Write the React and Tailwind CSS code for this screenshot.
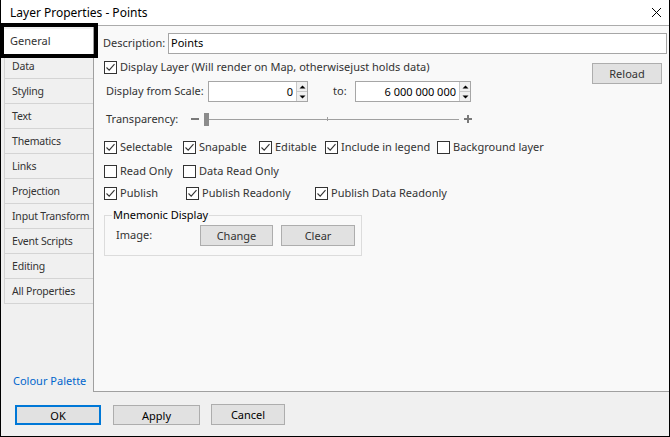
import React from 'react';

const font = { fontFamily: '"Noto Sans", "Open Sans", sans-serif' };

const Check = ({ checked }) => (
    <span className="w-[13px] h-[13px] border border-[#333333] bg-white flex items-center justify-center shrink-0">
        {checked && (
            <svg width="11" height="11" viewBox="0 0 11 11">
                <path d="M1.5 5.5 L4.2 8.2 L9.5 2.2" stroke="#333333" fill="none" strokeWidth="1.1" />
            </svg>
        )}
    </span>
);

const CheckItem = ({ checked, label, w }) => (
    <div className={`flex items-center gap-[3px] shrink-0 ${w}`}>
        <Check checked={checked} />
        <span className="text-[11px] text-[#333333] leading-[16px] whitespace-nowrap">{label}</span>
    </div>
);

const Spinner = () => (
    <div className="w-[11px] h-[19px] flex flex-col border-l border-[#c8c8c8] bg-[#f0f0f0]">
        <div className="flex-1 flex items-center justify-center border-b border-[#c8c8c8]">
            <svg width="7" height="4" viewBox="0 0 7 4"><path d="M0.5 3.5 L3.5 0.5 L6.5 3.5 Z" fill="#000" /></svg>
        </div>
        <div className="flex-1 flex items-center justify-center">
            <svg width="7" height="4" viewBox="0 0 7 4"><path d="M0.5 0.5 L3.5 3.5 L6.5 0.5 Z" fill="#000" /></svg>
        </div>
    </div>
);

const NumBox = ({ value, w }) => (
    <div className={`h-[21px] ${w} border border-[#a6a6a6] bg-white flex items-center`}>
        <span className="flex-1 text-right pr-[3px] text-[11px] text-black leading-[16px]">{value}</span>
        <Spinner />
    </div>
);

const Btn = ({ children, w, h = 'h-[21px]', extra = '' }) => (
    <button className={`${w} ${h} border border-[#adadad] bg-[#e1e1e1] text-[11px] text-[#333333] flex items-center justify-center leading-none ${extra}`}>
        {children}
    </button>
);

const tabs = ['Data', 'Styling', 'Text', 'Thematics', 'Links', 'Projection', 'Input Transform', 'Event Scripts', 'Editing', 'All Properties'];

export default function App() {
    return (
        <div className="w-[670px] h-[437px] flex flex-col bg-[#f0f0f0] border-x border-b border-black overflow-hidden" style={font}>
            {/* title bar */}
            <div className="h-[26px] shrink-0 bg-white border-b border-[#ababab] flex items-center pl-[9px] pr-[7px]">
                <span className="text-[12px] text-black leading-none">Layer Properties - Points</span>
                <svg className="ml-auto" width="11" height="11" viewBox="0 0 11 11">
                    <path d="M1 1 L10 10 M10 1 L1 10" stroke="#000" strokeWidth="1" />
                </svg>
            </div>

            <div className="flex-1 flex min-h-0">
                {/* sidebar */}
                <div className="w-[92px] shrink-0 flex flex-col pt-[3px] pl-[3px]">
                    <div className="relative h-[25px] bg-white flex items-center pl-[6px] z-10">
                        <span className="text-[11px] text-[#333333]">General</span>
                        <div className="absolute -left-[4px] -top-[6px] -right-[5px] -bottom-[4px] border-[4px] border-black pointer-events-none" />
                    </div>
                    {tabs.map((t) => (
                        <div key={t} className="h-[25px] border-l border-b border-[#d4d4d4] flex items-center pl-[7px] pt-[1px]">
                            <span className="text-[10.5px] tracking-[-0.2px] text-[#333333] whitespace-nowrap">{t}</span>
                        </div>
                    ))}
                    <div className="mt-auto mb-[3px] pl-[9px] text-[11px] text-[#0066cc] leading-[16px]">Colour Palette</div>
                </div>

                {/* content panel */}
                <div className="flex-1 bg-[#f9f9f9] border-l border-b border-[#a0a0a0] flex flex-col pt-[7px] pr-[2px]">
                    <div className="h-[21px] flex items-center pl-[9px]">
                        <span className="w-[65px] text-[11px] text-[#333333]">Description:</span>
                        <div className="flex-1 h-[21px] border border-[#a6a6a6] bg-white flex items-center pl-[2px] text-[11px] text-black">Points</div>
                    </div>

                    <div className="flex mt-[5px]">
                        <div className="flex flex-col">
                            <div className="pl-[10px]">
                                <CheckItem checked label="Display Layer (Will render on Map, otherwisejust holds data)" />
                            </div>
                            <div className="h-[21px] mt-[6px] flex items-center pl-[12px]">
                                <span className="w-[102px] text-[11px] text-[#333333]">Display from Scale:</span>
                                <NumBox value="0" w="w-[100px]" />
                                <span className="ml-[25px] w-[22px] text-[11px] text-[#333333]">to:</span>
                                <NumBox value="6 000 000 000" w="w-[116px]" />
                            </div>
                        </div>
                        <Btn w="w-[70px]" extra="ml-auto mr-[5px] mt-[4px]">Reload</Btn>
                    </div>

                    <div className="h-[16px] mt-[9px] flex items-center pl-[12px]">
                        <span className="w-[85px] text-[11px] text-[#333333]">Transparency:</span>
                        <span className="w-[8px] h-[2px] bg-[#7a7a7a]" />
                        <div className="relative w-[255px] ml-[5px] h-[14px] flex items-center">
                            <span className="w-[5px] h-[13px] bg-[#8c8c8c] shrink-0" />
                            <span className="flex-1 h-[1px] bg-[#a0a0a0]" />
                            <span className="absolute left-[123px] top-[5px] w-[1px] h-[4px] bg-[#a0a0a0]" />
                        </div>
                        <span className="ml-[5px] relative w-[8px] h-[8px] flex items-center justify-center">
                            <span className="absolute w-[8px] h-[2px] bg-[#7a7a7a]" />
                            <span className="absolute w-[2px] h-[8px] bg-[#7a7a7a]" />
                        </span>
                    </div>

                    <div className="flex mt-[12px] pl-[10px]">
                        <CheckItem checked label="Selectable" w="w-[79px]" />
                        <CheckItem checked label="Snapable" w="w-[76px]" />
                        <CheckItem checked label="Editable" w="w-[66px]" />
                        <CheckItem checked label="Include in legend" w="w-[112px]" />
                        <CheckItem label="Background layer" />
                    </div>
                    <div className="flex mt-[8px] pl-[10px]">
                        <CheckItem label="Read Only" w="w-[79px]" />
                        <CheckItem label="Data Read Only" />
                    </div>
                    <div className="flex mt-[6px] pl-[10px]">
                        <CheckItem checked label="Publish" w="w-[82px]" />
                        <CheckItem checked label="Publish Readonly" w="w-[129px]" />
                        <CheckItem checked label="Publish Data Readonly" />
                    </div>

                    <fieldset className="mt-[6px] ml-[10px] w-[258px] border border-[#dcdcdc] pb-[9px]">
                        <legend className="ml-[7px] px-[1px] text-[11px] text-black leading-[16px]">Mnemonic Display</legend>
                        <div className="flex items-center pl-[11px] mt-[2px]">
                            <span className="w-[84px] text-[11px] text-[#333333]">Image:</span>
                            <Btn w="w-[73px]">Change</Btn>
                            <Btn w="w-[74px]" extra="ml-[8px]">Clear</Btn>
                        </div>
                    </fieldset>
                </div>
            </div>

            {/* footer */}
            <div className="h-[44px] shrink-0 flex items-start pt-[12px] pl-[14px]">
                <div className="w-[86px] h-[20px] mt-[1px] p-[2px] bg-[#0078d7] flex">
                    <button className="flex-1 bg-[#e1e1e1] text-[11px] text-black flex items-center justify-center leading-none">OK</button>
                </div>
                <Btn w="w-[87px]" h="h-[20px]" extra="mt-[1px] ml-[12px] text-black">Apply</Btn>
                <Btn w="w-[74px]" extra="ml-[11px] text-black">Cancel</Btn>
            </div>
        </div>
    );
}
